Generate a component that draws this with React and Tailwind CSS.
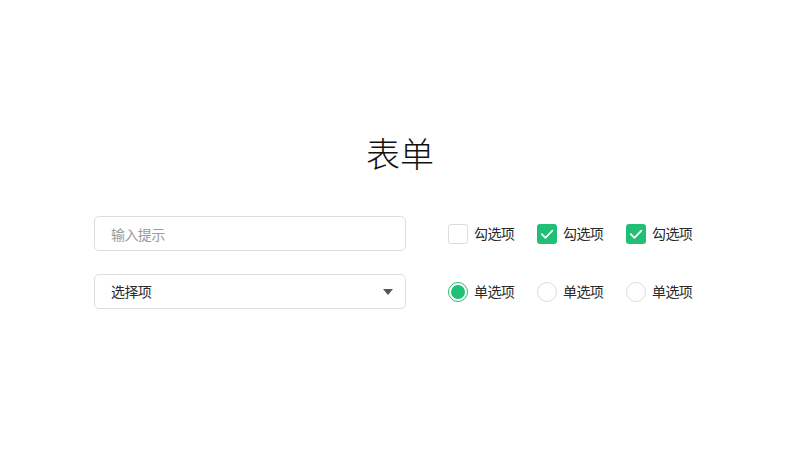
import { useState } from 'react';

const font = { fontFamily: '"Noto Sans CJK SC", "Noto Sans", sans-serif' };

function Check({ checked, label }) {
  return (
    <label className="flex items-center gap-[6px] w-[89px] shrink-0 cursor-pointer">
      <span
        className={
          checked
            ? 'w-[20px] h-[20px] rounded-[3px] bg-[#1fbf75] flex items-center justify-center'
            : 'w-[20px] h-[20px] rounded-[3px] border border-[#dcdcdc] bg-white'
        }
      >
        {checked && (
          <svg viewBox="0 0 20 20" className="w-[20px] h-[20px]" fill="none" stroke="white" strokeWidth="1.8" strokeLinecap="round" strokeLinejoin="round">
            <path d="M4.8 10.2l3.6 3.6L15.4 6.6" />
          </svg>
        )}
      </span>
      <span className="text-[14px] tracking-[-0.6px] text-[#2a2a2a]">{label}</span>
    </label>
  );
}

function Radio({ checked, label }) {
  return (
    <label className="flex items-center gap-[6px] w-[89px] shrink-0 cursor-pointer">
      <span
        className={
          checked
            ? 'w-[20px] h-[20px] rounded-full border border-[#1fbf75] flex items-center justify-center'
            : 'w-[20px] h-[20px] rounded-full border border-[#dcdcdc]'
        }
      >
        {checked && <span className="w-[14px] h-[14px] rounded-full bg-[#1fbf75]" />}
      </span>
      <span className="text-[14px] tracking-[-0.6px] text-[#2a2a2a]">{label}</span>
    </label>
  );
}

export default function App() {
  const [value, setValue] = useState('');

  return (
    <div className="w-[800px] h-[450px] bg-white flex flex-col pt-[131px]" style={font}>
      <h1 className="text-center text-[34px] leading-[44px] font-light text-[#111]">表单</h1>

      <div className="mt-[41px] ml-[94px] flex flex-col gap-[23px]">
        <div className="flex items-center">
          <input
            value={value}
            onChange={(e) => setValue(e.target.value)}
            placeholder="输入提示"
            className="w-[312px] h-[35px] shrink-0 border border-[#dedede] rounded-[5px] px-[16px] text-[14px] tracking-[-0.6px] text-[#2a2a2a] placeholder-[#9a9a9a] outline-none"
          />
          <div className="ml-[42px] flex">
            <Check label="勾选项" />
            <Check checked label="勾选项" />
            <Check checked label="勾选项" />
          </div>
        </div>

        <div className="flex items-center">
          <div className="w-[312px] h-[35px] shrink-0 border border-[#dedede] rounded-[5px] pl-[16px] pr-[12px] flex items-center justify-between">
            <span className="text-[14px] tracking-[-0.6px] text-[#2a2a2a]">选择项</span>
            <svg viewBox="0 0 10 6" className="w-[10px] h-[6px]">
              <path d="M0 0h10L5 6z" fill="#555" />
            </svg>
          </div>
          <div className="ml-[42px] flex">
            <Radio checked label="单选项" />
            <Radio label="单选项" />
            <Radio label="单选项" />
          </div>
        </div>
      </div>
    </div>
  );
}
